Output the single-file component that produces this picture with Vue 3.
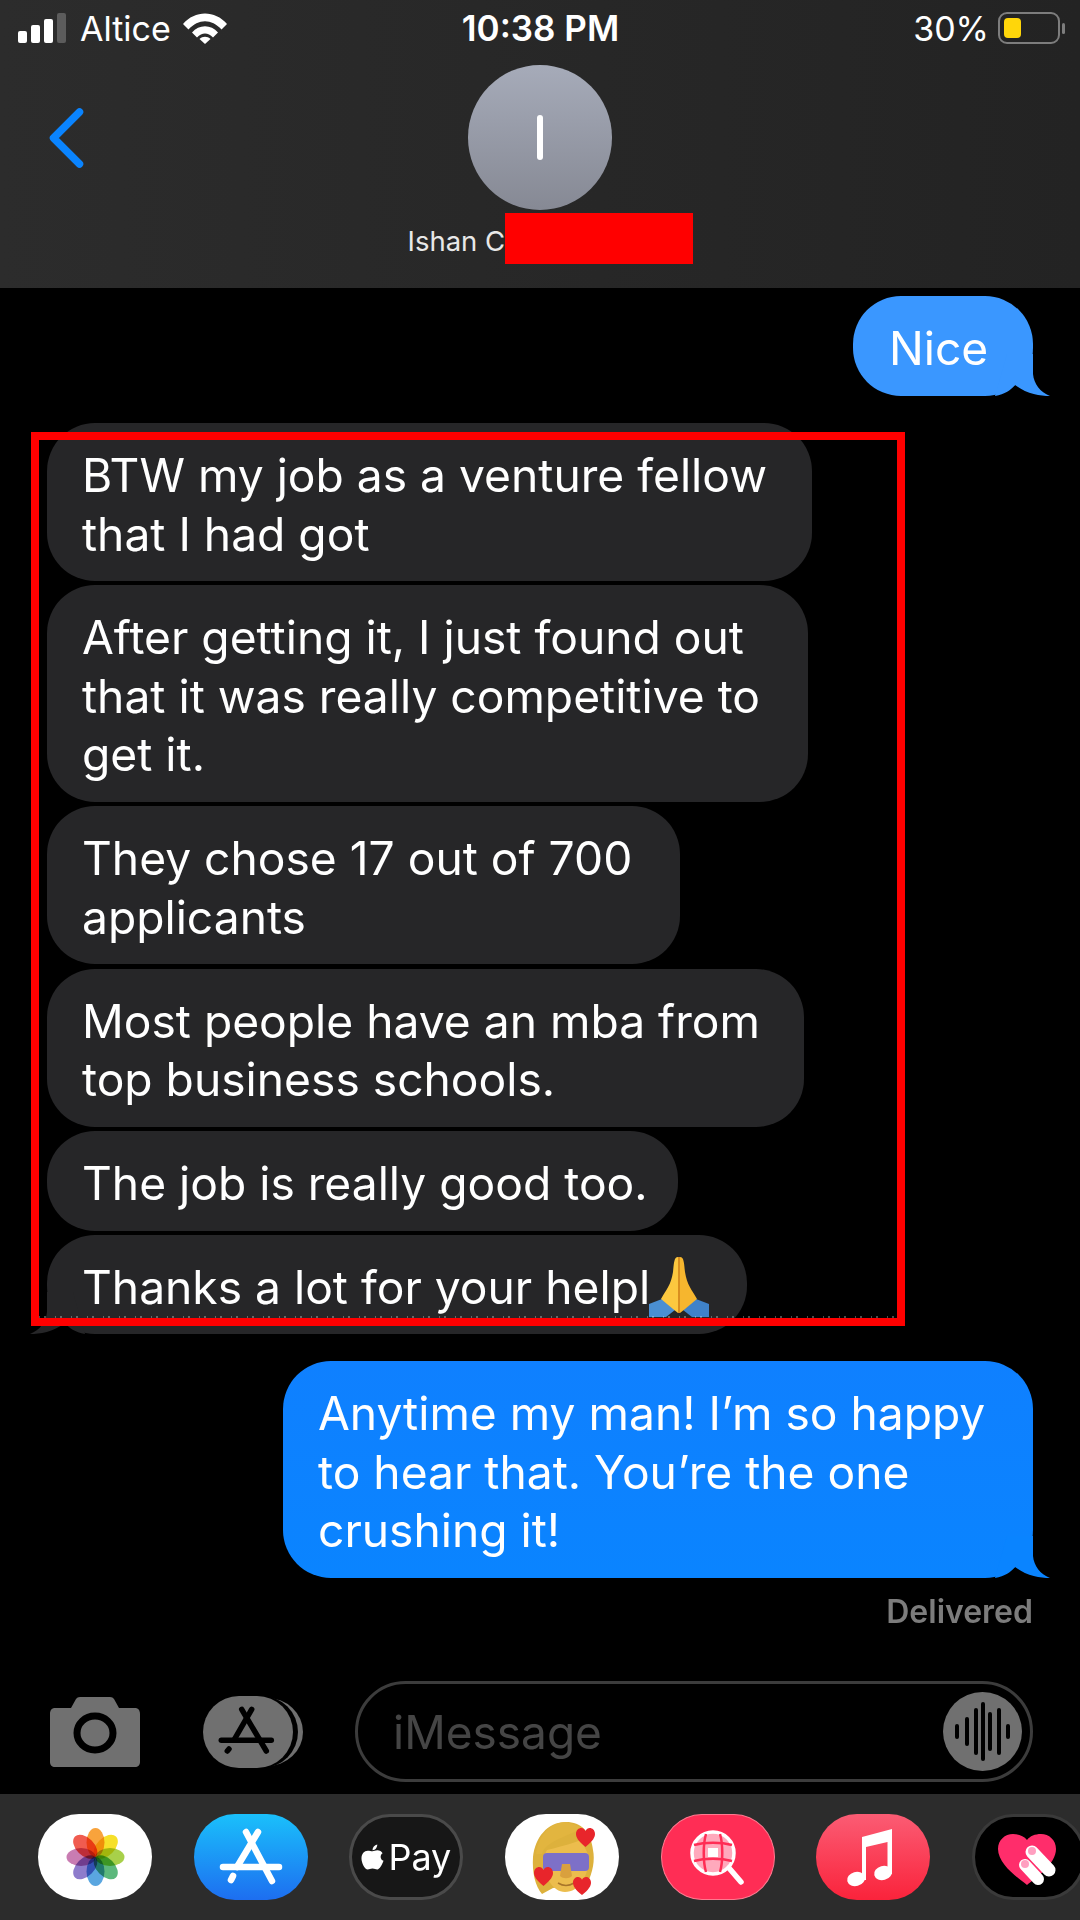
<template>
  <div class="phone">
    <header class="nav">
      <div class="status">
        <div class="status-left">
          <span class="signal">
            <i class="b1"></i><i class="b2"></i><i class="b3"></i><i class="b4"></i>
          </span>
          <span class="carrier">Altice</span>
          <svg class="wifi" viewBox="0 0 44 31">
            <path d="M0 11C12 -3 32 -3 44 11L38.500 16.500C28.500 5.500 15.500 5.500 5.500 16.500Z" fill="#fff"/>
            <path d="M9 19.500C16 11 28 11 35 19.500L30 24.500C25 19 19 19 14 24.500Z" fill="#fff"/>
            <path d="M16.500 26C19.500 23 24.500 23 27.500 26L22 31Z" fill="#fff"/>
          </svg>
        </div>
        <div class="clock">10:38 PM</div>
        <div class="status-right">
          <span class="pct">30%</span>
          <span class="battery"><i class="level"></i></span>
          <i class="nub"></i>
        </div>
      </div>
      <svg class="back" viewBox="0 0 35 60">
        <path d="M30.500 4L4.500 30L30.500 56" fill="none" stroke="#0a84ff" stroke-width="7.500" stroke-linecap="round" stroke-linejoin="round"/>
      </svg>
      <div class="avatar"><i></i></div>
      <div class="name">
        <span>Ishan C</span>
        <i class="redact"></i>
      </div>
    </header>

    <main class="thread">
      <div class="bubble out nice">
        <span class="msg">Nice</span>
        <svg class="tail-out" viewBox="0 0 55 42"><path :d="tailPath" fill="#3a97ff"/></svg>
      </div>

      <div class="group">
        <div v-for="(m, i) in incoming" :key="i" class="bubble in" :style="{ width: m.w + 'px' }">
          <div v-for="line in m.lines" :key="line" class="msg">{{ line }}</div>
          <template v-if="m.last">
            <div class="msg last-line">
              Thanks a lot for your helpl
              <svg class="pray" viewBox="0 0 60 60">
                <path d="M0 47L13 42L26 53L17 60H0Z" fill="#4a8fd3"/>
                <path d="M60 47L47 42L34 53L43 60H60Z" fill="#3f82c9"/>
                <path d="M29 0C25 0 25 6 24 15C22 28 17 33 12 42L24 52L29 56Z" fill="#fcc83f"/>
                <path d="M31 0C35 0 35 6 36 15C38 28 43 33 48 42L36 52L31 56Z" fill="#f6b62e"/>
                <path d="M29 0H31V56H29Z" fill="#d98f1f"/>
              </svg>
            </div>
            <svg class="tail-in" viewBox="0 0 55 42"><path :d="tailPath" fill="#262628"/></svg>
          </template>
        </div>
        <div class="marker"></div>
      </div>

      <div class="bubble out long">
        <div class="msg">Anytime my man! I’m so happy</div>
        <div class="msg">to hear that. You’re the one</div>
        <div class="msg">crushing it!</div>
        <svg class="tail-out" viewBox="0 0 55 42"><path :d="tailPath" fill="#0a84ff"/></svg>
      </div>
      <div class="delivered">Delivered</div>
    </main>

    <div class="composer">
      <svg class="camera" viewBox="0 0 90 70">
        <path d="M5 11H21L26 2C27 .8 28 0 30 0H60C62 0 63 .8 64 2L69 11H85C88 11 90 13 90 17V65C90 68 88 70 85 70H5C2 70 0 68 0 65V17C0 13 2 11 5 11Z" fill="#707070"/>
        <ellipse cx="45" cy="36" rx="18" ry="17" fill="none" stroke="#000" stroke-width="7"/>
      </svg>
      <svg class="apps" viewBox="0 0 100 72">
        <rect x="10" y="2" width="90" height="68" rx="36" ry="34" fill="#707070"/>
        <rect x="5" y="0" width="90" height="72" rx="36" ry="36" fill="#000"/>
        <rect x="0" y="0" width="90" height="72" rx="36" ry="36" fill="#707070"/>
        <g fill="none" stroke="#000" stroke-width="5.500" stroke-linecap="round">
          <path d="M38.700 13.300L63.300 55"/>
          <path d="M48.700 13.300L31 44"/>
          <path d="M26 53L24.300 55"/>
          <path d="M18.300 44.300H68.300"/>
        </g>
      </svg>
      <div class="input">
        <span>iMessage</span>
        <svg class="voice" viewBox="0 0 79 79">
          <circle cx="39.500" cy="39.500" r="39.500" fill="#707070"/>
          <g stroke="#000" stroke-width="4" stroke-linecap="round">
            <path d="M14 34V45"/><path d="M24 27V52"/><path d="M33 18V61"/><path d="M40 12V67"/><path d="M47 22V57"/><path d="M56 18V61"/><path d="M65 34V45"/>
          </g>
        </svg>
      </div>
    </div>

    <footer class="dock">
      <div class="app photos">
        <svg viewBox="0 0 114 86">
          <ellipse v-for="p in petals" :key="p.a" class="petal" cx="57.500" cy="28.500" rx="9" ry="14.500" :fill="p.c" :transform="`rotate(${p.a} 57.500 43)`"/>
        </svg>
      </div>
      <div class="app store">
        <svg viewBox="0 0 114 86">
          <g fill="none" stroke="#fff" stroke-width="6.500" stroke-linecap="round">
            <path d="M52 18L78 67"/><path d="M64 18L43 53"/><path d="M39 62L37 66"/><path d="M29 53H85"/>
          </g>
        </svg>
      </div>
      <div class="app pay">
        <svg class="apple" viewBox="0 0 24 28">
          <path d="M17 1C17 4 15 7 12 7C12 4 14 1.500 17 1ZM12 8C13.500 8 15 7 17 7C19.500 7 21.500 8.200 22.500 10C19.500 12 20 16.500 23.500 18C22 22 19.500 27 17 27C15 27 14.500 26 12 26C9.500 26 9 27 7 27C4 27 .5 20 .5 15.500C.5 10.500 3.500 7.500 7 7.500C9 7.500 10.500 8 12 8Z" fill="#fff"/>
        </svg>
        <span>Pay</span>
      </div>
      <div class="app memoji">
        <svg viewBox="0 0 114 86">
          <path d="M61 8C42 8 30 24 28 43C27 58 30 72 37 80L48 74L82 70C88 58 90 46 88 36C86 18 76 8 61 8Z" fill="#ddb13c"/>
          <path d="M42 36C50 34 66 30 76 26L84 42C84 62 74 78 60 78C48 78 38 62 38 44Z" fill="#ecbd4d"/>
          <path d="M37 40C40 28 58 24 78 14L62 8C46 8 34 20 31 40Z" fill="#e2b53f"/>
          <rect x="38" y="39" width="46" height="18" rx="4" fill="#7d70c8"/>
          <path d="M57 50H65L67 62C64 65 58 65 55 62Z" fill="#d9a03e"/>
          <path d="M53 69C58 72 64 72 69 69" fill="none" stroke="#a9762a" stroke-width="1.500"/>
          <path v-for="h in hearts" :key="h" d="M10 19C2 13 0 9 0 6C0 2 3 0 5.500 0C7.500 0 9 1 10 3C11 1 12.500 0 14.500 0C17 0 20 2 20 6C20 9 18 13 10 19Z" fill="#e8252b" :transform="h"/>
        </svg>
      </div>
      <div class="app search">
        <svg viewBox="0 0 114 86">
          <ellipse cx="52" cy="39" rx="21" ry="21" fill="#ffa9bc" stroke="#fff" stroke-width="3.500"/>
          <g stroke="#ff2d55" stroke-width="2.500" fill="none">
            <path d="M33 31C44 28 60 28 71 31"/><path d="M33 47C44 44 60 44 71 47"/>
            <path d="M45 20C42 30 42 48 45 58"/><path d="M59 20C62 30 62 48 59 58"/>
          </g>
          <rect x="47" y="34" width="10" height="9" fill="#fff"/>
          <path d="M68 54L80 68" stroke="#fff" stroke-width="5.500" stroke-linecap="round"/>
        </svg>
      </div>
      <div class="app music">
        <svg viewBox="0 0 114 86">
          <path d="M46 23L76 15V60H71.500V28L50 33V66H46Z" fill="#fff"/>
          <ellipse cx="40" cy="65" rx="9" ry="7" fill="#fff" transform="rotate(-15 40 65)"/>
          <ellipse cx="67" cy="59" rx="9" ry="7" fill="#fff" transform="rotate(-15 67 59)"/>
        </svg>
      </div>
      <div class="app heart">
        <svg viewBox="0 0 114 86">
          <path d="M55 71C46 64 26 50 26 35C26 26 33 20 41 20C47 20 52 22 55 26C58 22 63 20 69 20C77 20 84 26 84 35C84 50 64 64 55 71Z" fill="#ff2d6b"/>
          <path d="M60 38L77 56" stroke="#fff" stroke-width="13" stroke-linecap="round"/>
          <path d="M53 51L66 65" stroke="#fff" stroke-width="12" stroke-linecap="round"/>
          <circle cx="60" cy="37" r="4" fill="#ff9fc0"/>
          <circle cx="53" cy="50" r="4" fill="#ff9fc0"/>
        </svg>
      </div>
    </footer>
  </div>
</template>

<script setup>
const incoming = [
  { w: 765, lines: ['BTW my job as a venture fellow', 'that I had got'] },
  { w: 761, lines: ['After getting it, I just found out', 'that it was really competitive to', 'get it.'] },
  { w: 633, lines: ['They chose 17 out of 700', 'applicants'] },
  { w: 757, lines: ['Most people have an mba from', 'top business schools.'] },
  { w: 631, lines: ['The job is really good too.'] },
  { w: 700, lines: [], last: true }
]

// shared bubble corner with the little tail
const tailPath = 'M38 0V20C39 30 45 38 55 42C45 42 32 40 20 31C16 36 10 40 0 42L12 0Z'

const petals = [
  { a: 0, c: '#f8a33c' },
  { a: 45, c: '#f6e02a' },
  { a: 90, c: '#a8d04a' },
  { a: 135, c: '#5cb87c' },
  { a: 180, c: '#5aa6e0' },
  { a: 225, c: '#8e7ccc' },
  { a: 270, c: '#c97cb2' },
  { a: 315, c: '#f05c50' }
]

const hearts = [
  'translate(71 14) scale(.95 1)',
  'translate(29 53) scale(.95 1)',
  'translate(68 63) scale(.9 .95)'
]
</script>

<style>
html, body { margin: 0; background: #000; }
</style>

<style scoped>
.phone {
  width: 1080px;
  height: 1920px;
  display: flex;
  flex-direction: column;
  overflow: hidden;
  background: #000;
  color: #fff;
  font-family: Inter, "Noto Sans", sans-serif;
}

/* Header */
.nav {
  position: relative;
  height: 288px;
  flex: none;
  box-sizing: border-box;
  background: linear-gradient(90deg, #2c2c2c, #232323);
  display: flex;
  flex-direction: column;
  align-items: center;
}
.status {
  width: 100%;
  height: 56px;
  box-sizing: border-box;
  padding: 0 15px 0 18px;
  display: grid;
  grid-template-columns: 1fr auto 1fr;
  align-items: center;
  font-size: 34px;
}
.status-left { display: flex; align-items: center; }
.signal { display: flex; align-items: flex-end; gap: 4.500px; height: 30px; width: 48px; }
.signal i { width: 9px; border-radius: 2px; background: #fff; }
.signal .b1 { height: 12px; }
.signal .b2 { height: 18px; }
.signal .b3 { height: 24px; }
.signal .b4 { height: 30px; background: #5c5c5c; }
.carrier { margin-left: 14px; }
.wifi { width: 44px; height: 31px; margin-left: 12px; }
.clock { font-weight: 600; font-size: 35px; margin-left: -2px; }
.status-right { display: flex; align-items: center; justify-content: flex-end; }
.battery {
  width: 62px;
  height: 32px;
  margin-left: 9px;
  box-sizing: border-box;
  border: 2px solid #7d7d7d;
  border-radius: 9px;
  padding: 4px;
  display: flex;
}
.level { width: 17px; background: #ffd60a; border-radius: 4px; }
.nub { width: 3px; height: 11px; margin-left: 2px; background: #7d7d7d; border-radius: 2px; }
.back { position: absolute; left: 49px; top: 108px; width: 35px; height: 60px; }
.avatar {
  width: 144px;
  height: 145px;
  margin-top: 9px;
  border-radius: 50%;
  background: linear-gradient(#a6abb9, #868994);
  display: flex;
  align-items: center;
  justify-content: center;
}
.avatar i { width: 6px; height: 45px; border-radius: 3px; background: #fff; }
.name {
  position: relative;
  width: 285px;
  margin-top: 13px;
  margin-left: 20px;
  font-size: 27.500px;
  line-height: 36px;
  color: #e8e8e8;
}
.redact { position: absolute; left: 97px; top: -10px; width: 188px; height: 51px; background: #f00; }

/* Messages */
.thread {
  flex: 1;
  display: flex;
  flex-direction: column;
  box-sizing: border-box;
  padding: 8px 47px 0;
}
.bubble {
  position: relative;
  box-sizing: border-box;
  padding: 23px 0 18px 35px;
  border-radius: 48px;
  font-size: 46.200px;
  line-height: 58.500px;
  white-space: nowrap;
}
.msg { position: relative; z-index: 1; }
.in { background: #262628; }
.out { align-self: flex-end; }
.nice { width: 180px; height: 100px; padding-left: 36px; background: #3a97ff; }
.long { width: 750px; margin-top: 27px; padding-left: 35px; background: linear-gradient(#0f80ff, #0a84ff); }
.tail-out { position: absolute; right: -17px; bottom: 0; width: 55px; height: 42px; }
.tail-in { position: absolute; left: -17px; bottom: 0; width: 55px; height: 42px; transform: scaleX(-1); }
.group {
  position: relative;
  display: flex;
  flex-direction: column;
  gap: 4.400px;
  margin-top: 27px;
}
.last-line { display: flex; align-items: flex-start; height: 58.500px; }
.pray { width: 60px; height: 60px; flex: none; margin-top: -1px; margin-left: -1px; }
.marker {
  position: absolute;
  z-index: 2;
  left: -16px;
  top: 9px;
  width: 874px;
  height: 894px;
  box-sizing: border-box;
  border: 8.500px solid #f00;
}
.marker::after {
  content: "";
  position: absolute;
  left: 0;
  right: 0;
  bottom: 0;
  height: 2px;
  opacity: .3;
  background: repeating-linear-gradient(90deg, #fff 0 1px, transparent 1px 5px, #fff 5px 7px, transparent 7px 16px);
}
.delivered {
  align-self: flex-end;
  margin-top: 17px;
  font-size: 32px;
  font-weight: 600;
  line-height: 34px;
  color: #7c7c7c;
}

/* Composer */
.composer {
  height: 113px;
  flex: none;
  box-sizing: border-box;
  padding-left: 50px;
  display: flex;
  align-items: flex-start;
}
.camera { width: 90px; height: 70px; margin-top: 16px; }
.apps { width: 100px; height: 72px; margin-top: 15px; margin-left: 63px; }
.input {
  width: 678px;
  height: 101px;
  margin-left: 52px;
  box-sizing: border-box;
  border: 3px solid #3c3c3c;
  border-radius: 51px;
  padding: 0 8px 0 35px;
  display: flex;
  align-items: center;
  justify-content: space-between;
  font-size: 46px;
  color: #454545;
}
.voice { width: 79px; height: 79px; }

/* App strip */
.dock {
  height: 126px;
  flex: none;
  box-sizing: border-box;
  padding: 20px 0 0 38px;
  background: #2c2c2c;
  display: flex;
  gap: 41.700px;
  overflow: hidden;
}
.app {
  width: 114px;
  height: 86px;
  flex: none;
  box-sizing: border-box;
  border-radius: 41px / 43px;
  display: flex;
  align-items: center;
  justify-content: center;
}
.app svg { width: 114px; height: 86px; flex: none; }
.photos { background: #fff; }
.petal { mix-blend-mode: multiply; }
.store { background: linear-gradient(#1ac0fb, #1d6ef0); }
.pay { background: #171717; border: 3px solid #4a4a4a; gap: 4px; font-size: 36px; font-weight: 400; }
.pay .apple { width: 23px; height: 28px; }
.memoji { background: #fff; }
.search { background: #ff2d55; border: 1px solid #ff7a90; }
.music { background: linear-gradient(#fb5c74, #fa233b); }
.heart { background: #000; border: 3px solid #3a3a3a; }
.heart svg { margin: -3px; }
</style>
